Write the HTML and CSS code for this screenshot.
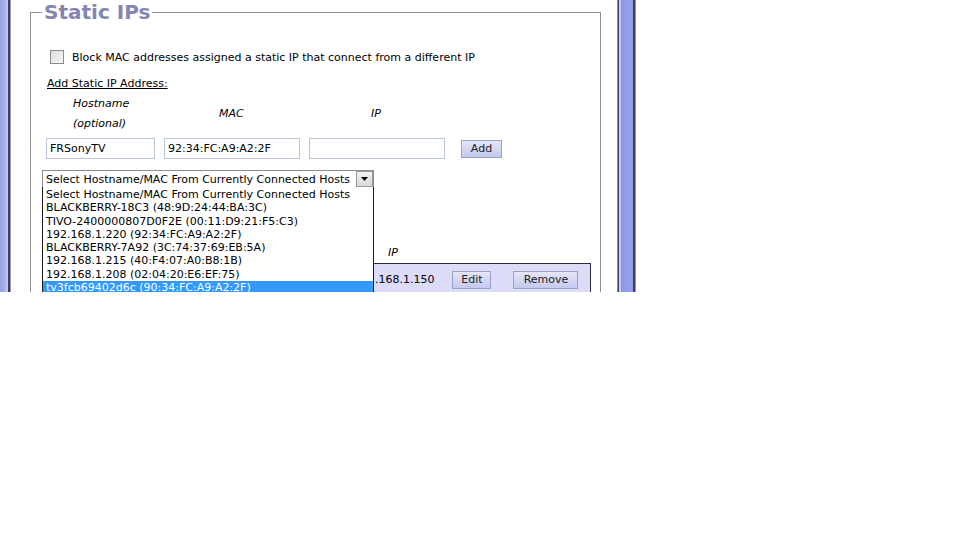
FILE: index.html
```html
<!DOCTYPE html>
<html>
<head>
<meta charset="utf-8">
<link rel="stylesheet" href="styles.css">
</head>
<body>
<div class="shot">
  <div class="edge-left"></div>
  <div class="page">
    <fieldset class="box">
      <legend class="legend">Static IPs</legend>
      <div class="check-row">
        <span class="cb"></span>
        <span class="cb-label">Block MAC addresses assigned a static IP that connect from a different IP</span>
      </div>
      <div class="sub">Add Static IP Address:</div>
      <div class="heads">
        <div class="h h-host">Hostname<br>(optional)</div>
        <div class="h h-mac">MAC</div>
        <div class="h h-ip">IP</div>
      </div>
      <div class="inputs">
        <div class="inp inp-host">FRSonyTV</div>
        <div class="inp inp-mac">92:34:FC:A9:A2:2F</div>
        <div class="inp inp-ip"></div>
        <div class="btn btn-add">Add</div>
      </div>
      <div class="select">
        <span class="select-text">Select Hostname/MAC From Currently Connected Hosts</span>
        <span class="arrow"><svg width="7" height="4" viewBox="0 0 7 4"><path d="M0 0H7L3.5 4Z" fill="#000"/></svg></span>
      </div>
      <div class="table-area">
        <div class="ip-head">IP</div>
        <div class="row">
          <span class="row-ip">192.168.1.150</span>
          <span class="btn btn-edit">Edit</span>
          <span class="btn btn-remove">Remove</span>
        </div>
      </div>
    </fieldset>
  </div>
  <div class="edge-right"></div>
  <ul class="list">
    <li>Select Hostname/MAC From Currently Connected Hosts</li>
    <li>BLACKBERRY-18C3 (48:9D:24:44:BA:3C)</li>
    <li>TIVO-2400000807D0F2E (00:11:D9:21:F5:C3)</li>
    <li>192.168.1.220 (92:34:FC:A9:A2:2F)</li>
    <li>BLACKBERRY-7A92 (3C:74:37:69:EB:5A)</li>
    <li>192.168.1.215 (40:F4:07:A0:B8:1B)</li>
    <li>192.168.1.208 (02:04:20:E6:EF:75)</li>
    <li class="sel">tv3fcb69402d6c (90:34:FC:A9:A2:2F)</li>
  </ul>
</div>
</body>
</html>
```

FILE: styles.css
```css
html, body {
  margin: 0;
  padding: 0;
  background: #fff;
}
.shot {
  position: relative;
  width: 637px;
  height: 292px;
  overflow: hidden;
  display: flex;
  font-family: "DejaVu Sans", Verdana, sans-serif;
  font-size: 11px;
  color: #000;
}
.edge-left {
  width: 11px;
  flex: none;
  background: linear-gradient(to right, #9aa3e6 0, #a8b0ec 5px, #c4c8f2 7px, #c4c8f2 8px, #3a3e62 8px, #3a3e62 10px, #9a9aa8 10px, #9a9aa8 11px);
}
.edge-right {
  width: 20px;
  flex: none;
  background: linear-gradient(to right, #8c8c98 0, #8c8c98 1px, #3e4268 1px, #3e4268 2px, #c8ccf4 2px, #c8ccf4 4px, #8d97e6 4px, #97a0ea 14px, #8d97e6 16px, #3a3e60 16px, #3a3e60 18px, #9a9ab0 18px, #9a9ab0 19px, #fff 19px);
}
.page {
  width: 606px;
  flex: none;
  background: #fff;
}
.box {
  margin: 0 0 0 19px;
  width: 571px;
  box-sizing: border-box;
  border: 1px solid #8e8e9c;
  padding: 0;
  min-height: 400px;
}
.legend {
  margin-left: 11px;
  padding: 0 2px;
  font-size: 20px;
  font-weight: bold;
  line-height: 24px;
  color: #8585b3;
}
.check-row {
  display: flex;
  align-items: center;
  margin: 25px 0 0 19px;
  height: 16px;
}
.cb {
  width: 12px;
  height: 12px;
  border: 1px solid #8c8c8c;
  background: linear-gradient(135deg, #dcdcdc, #f8f8f8);
  flex: none;
}
.cb-label {
  margin-left: 8px;
}
.sub {
  margin: 12px 0 0 16px;
  text-decoration: underline;
  line-height: 14px;
}
.heads {
  display: flex;
  margin-top: 3px;
  height: 40px;
  align-items: center;
  font-style: italic;
  line-height: 20px;
}
.h-host { margin-left: 42px; width: 146px; }
.h-mac { width: 152px; }
.inputs {
  display: flex;
  align-items: center;
  margin: 4px 0 0 15px;
  height: 21px;
}
.inp {
  box-sizing: border-box;
  height: 21px;
  border: 1px solid #b8c4d8;
  padding: 0 3px;
  line-height: 19px;
  background: #fff;
}
.inp-host { width: 109px; }
.inp-mac { width: 136px; margin-left: 9px; }
.inp-ip { width: 136px; margin-left: 9px; }
.btn {
  box-sizing: border-box;
  display: inline-block;
  border: 1px solid #9aa2cc;
  background: linear-gradient(#e4e6f8, #c4c9ee);
  text-align: center;
  line-height: 16px;
  height: 18px;
  color: #222;
}
.btn-add { width: 41px; margin-left: 16px; }
.select {
  box-sizing: border-box;
  display: flex;
  align-items: center;
  justify-content: space-between;
  margin: 11px 0 0 11px;
  width: 332px;
  height: 18px;
  border: 1px solid #8c8c8c;
  padding-left: 3px;
  background: #fff;
}
.arrow {
  box-sizing: border-box;
  width: 17px;
  height: 16px;
  border: 1px solid #9a9a9a;
  background: linear-gradient(#f2f2f2, #d8d8d8);
  display: flex;
  align-items: center;
  justify-content: center;
}
.table-area {
  margin-top: 58px;
}
.ip-head {
  margin-left: 357px;
  font-style: italic;
  line-height: 14px;
}
.row {
  margin: 3px 0 0 302px;
  width: 258px;
  height: 40px;
  box-sizing: border-box;
  border: 1px solid #2a2a3a;
  background: #dcdcf8;
  display: flex;
  align-items: flex-start;
  padding-top: 7px;
}
.row-ip {
  margin-left: 20px;
  line-height: 18px;
}
.btn-edit { width: 39px; margin-left: 18px; }
.btn-remove { width: 65px; margin-left: 22px; }
.list {
  position: absolute;
  left: 42px;
  top: 187px;
  width: 332px;
  height: 120px;
  box-sizing: border-box;
  margin: 0;
  padding: 1px 0 0 0;
  list-style: none;
  border: 1px solid #1c1c1c;
  border-top: none;
  background: #fff;
}
.list li {
  line-height: 13.3px;
  height: 13.3px;
  padding-left: 3px;
  white-space: nowrap;
}
.list li.sel {
  background: #3399ff;
  color: #fff;
}
```
